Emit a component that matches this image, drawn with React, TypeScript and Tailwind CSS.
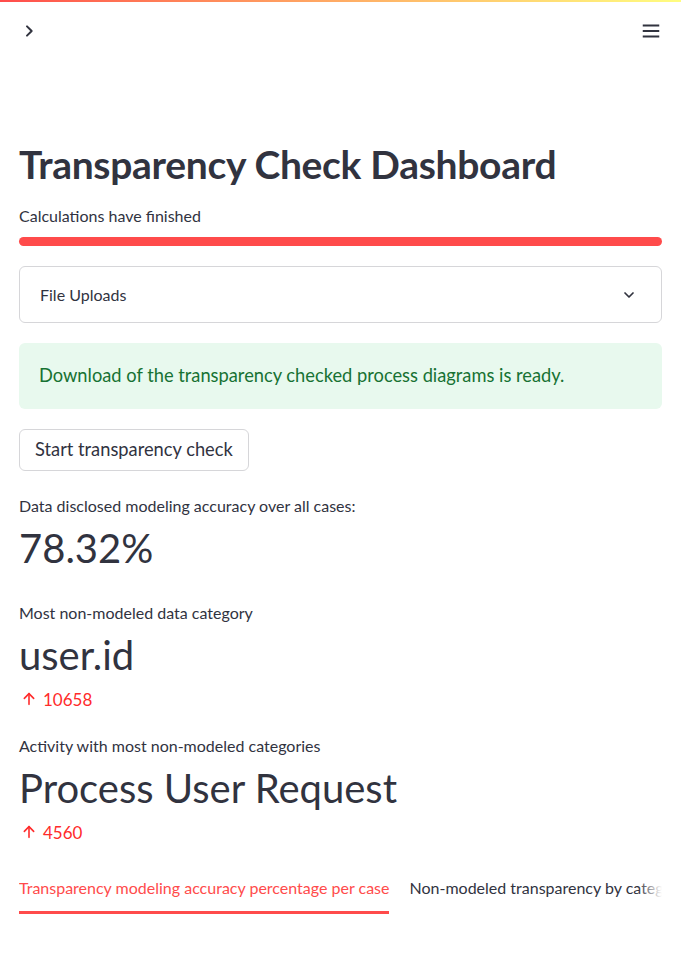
import React from 'react';

const ArrowUp = () => (
  <svg className="w-[16px] h-[16px]" viewBox="0 0 24 24" fill="none" stroke="currentColor" strokeWidth="2.4" strokeLinecap="round" strokeLinejoin="round">
    <path d="M12 20V4" />
    <path d="M5 11l7-7 7 7" />
  </svg>
);

interface MetricProps {
  label: string;
  value: string;
  delta?: string;
}

const Metric: React.FC<MetricProps> = ({ label, value, delta }) => (
  <div className="flex flex-col">
    <div className="h-[20px] flex items-center text-[16px] leading-none">{label}</div>
    <div className="mt-[8px] h-[48px] flex items-center text-[40px] leading-none font-normal">{value}</div>
    {delta && (
      <div className="mt-[10px] h-[20px] flex items-center gap-[6px] text-[#ff2b2b] text-[17px] leading-none pl-[2px]">
        <ArrowUp />
        <span>{delta}</span>
      </div>
    )}
  </div>
);

export default function App() {
  return (
    <div className="min-h-screen bg-white text-[#31333f]" style={{ fontFamily: 'Lato, "Noto Sans", sans-serif' }}>
      <div className="h-[2px] bg-gradient-to-r from-[#ff4b4b] to-[#fffd80]" />
      <header className="h-[58px] flex items-center justify-between px-[21px]">
        <svg className="w-[16px] h-[16px]" viewBox="0 0 24 24" fill="none" stroke="#31333f" strokeWidth="3" strokeLinecap="round" strokeLinejoin="round">
          <path d="M9 5l7 7-7 7" />
        </svg>
        <svg className="w-[22px] h-[22px] mr-[-2px]" viewBox="0 0 24 24" fill="none" stroke="#31333f" strokeWidth="2">
          <path d="M3 6h18M3 12h18M3 18h18" />
        </svg>
      </header>

      <main className="px-[19px] flex flex-col">
        <h1 className="mt-[84px] h-[40px] flex items-center text-[39px] font-bold leading-none tracking-[-0.3px]">
          Transparency Check Dashboard
        </h1>

        <div className="mt-[22px] h-[20px] flex items-center text-[16px] leading-none">Calculations have finished</div>
        <div className="mt-[11px] h-[9px] rounded-full bg-[#ff4b4b]" />

        <div className="mt-[20px] h-[57px] border border-[#d6d6d9] rounded-[6px] flex items-center justify-between pl-[20px] pr-[24px]">
          <span className="text-[16px]">File Uploads</span>
          <svg className="w-[16px] h-[16px]" viewBox="0 0 24 24" fill="none" stroke="#31333f" strokeWidth="2.6" strokeLinecap="round" strokeLinejoin="round">
            <path d="M6 9l6 6 6-6" />
          </svg>
        </div>

        <div className="mt-[20px] h-[66px] rounded-[6px] bg-[#e8f9ee] flex items-center px-[20px]">
          <span className="text-[18.3px] text-[#177233]">Download of the transparency checked process diagrams is ready.</span>
        </div>

        <div className="mt-[20px]">
          <button className="h-[42px] px-[15px] border border-[#d6d6d9] rounded-[6px] bg-white text-[18.3px]">
            Start transparency check
          </button>
        </div>

        <div className="mt-[25px]">
          <Metric label="Data disclosed modeling accuracy over all cases:" value="78.32%" />
        </div>
        <div className="mt-[31px]">
          <Metric label="Most non-modeled data category" value="user.id" delta="10658" />
        </div>
        <div className="mt-[27px]">
          <Metric label="Activity with most non-modeled categories" value="Process User Request" delta="4560" />
        </div>

        <div className="mt-[36px] relative">
          <div className="flex gap-[20px] overflow-hidden whitespace-nowrap">
            <div className="flex flex-col shrink-0">
              <span className="h-[20px] flex items-center text-[16px] text-[#ff4b4b]">Transparency modeling accuracy percentage per case</span>
              <div className="mt-[13px] h-[3px] bg-[#ff4b4b]" />
            </div>
            <div className="flex flex-col shrink-0">
              <span className="h-[20px] flex items-center text-[16px]">Non-modeled transparency by category</span>
            </div>
          </div>
          <div className="absolute left-0 right-0 top-[34px] h-[2px] bg-[#e6e6e9]" style={{ zIndex: -1 }} />
          <div className="absolute right-0 top-0 h-[22px] w-[24px] bg-gradient-to-r from-transparent to-white" />
        </div>
      </main>
    </div>
  );
}
